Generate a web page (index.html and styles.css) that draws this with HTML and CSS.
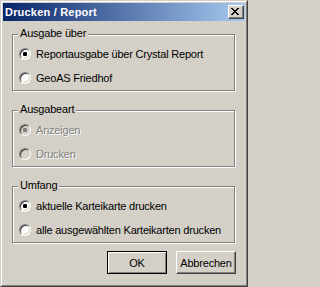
FILE: index.html
```html
<!DOCTYPE html>
<html lang="de">
<head>
<meta charset="utf-8">
<title>Drucken / Report</title>
<link rel="stylesheet" href="styles.css">
</head>
<body>
<div class="window">
  <div class="frame">
    <div class="caption">
      <span class="caption-title">Drucken / Report</span>
      <button class="caption-close" type="button" aria-label="Schließen">
        <svg class="close-glyph" width="8" height="7" viewBox="0 0 8 7" shape-rendering="crispEdges">
          <path d="M0 0h2v1H0z M6 0h2v1H6z M1 1h2v1H1z M5 1h2v1H5z M2 2h4v1H2z M3 3h2v1H3z M2 4h4v1H2z M1 5h2v1H1z M5 5h2v1H5z M0 6h2v1H0z M6 6h2v1H6z" fill="#000"/>
        </svg>
      </button>
    </div>
    <div class="client">
      <div class="group">
        <span class="group-title">Ausgabe über</span>
        <div class="option"><span class="radio checked"></span><span class="option-label">Reportausgabe über Crystal Report</span></div>
        <div class="option"><span class="radio"></span><span class="option-label">GeoAS Friedhof</span></div>
      </div>
      <div class="group">
        <span class="group-title">Ausgabeart</span>
        <div class="option disabled"><span class="radio checked"></span><span class="option-label">Anzeigen</span></div>
        <div class="option disabled"><span class="radio"></span><span class="option-label">Drucken</span></div>
      </div>
      <div class="group">
        <span class="group-title">Umfang</span>
        <div class="option"><span class="radio checked"></span><span class="option-label">aktuelle Karteikarte drucken</span></div>
        <div class="option"><span class="radio"></span><span class="option-label">alle ausgewählten Karteikarten drucken</span></div>
      </div>
      <div class="buttons">
        <button class="btn btn-default" type="button">OK</button>
        <button class="btn" type="button">Abbrechen</button>
      </div>
    </div>
  </div>
</div>
</body>
</html>
```
FILE: styles.css
```css
html, body {
  margin: 0;
  padding: 0;
  background: #d4d0c8;
}

body {
  font-family: "Liberation Sans", Arial, sans-serif;
  font-size: 11px;
  color: #000;
}

.window {
  width: 248px;
  height: 287px;
  box-sizing: border-box;
  border: 1px solid;
  border-color: #d4d0c8 #404040 #404040 #d4d0c8;
  background: #d4d0c8;
}

.frame {
  height: 100%;
  box-sizing: border-box;
  border: 1px solid;
  border-color: #fff #808080 #808080 #fff;
  padding: 1px;
}

.caption {
  height: 18px;
  display: flex;
  align-items: flex-start;
  padding-left: 2px;
  background: linear-gradient(to right, #0a246a, #a6caf0);
}

.caption-title {
  flex: 1;
  margin-top: 1px;
  line-height: 17px;
  color: #fff;
  font-weight: bold;
  letter-spacing: 0.2px;
  white-space: nowrap;
}

.caption-close {
  width: 16px;
  height: 14px;
  margin: 2px 1px 0 0;
  padding: 2px 0 0 2px;
  box-sizing: border-box;
  display: flex;
  align-items: flex-start;
  justify-content: flex-start;
  background: #d4d0c8;
  border: 1px solid;
  border-color: #fff #404040 #404040 #fff;
  box-shadow: inset -1px -1px 0 #808080;
}

.close-glyph {
  display: block;
}

.client {
  display: flex;
  flex-direction: column;
  padding: 13px 10px 0 9px;
}

.group {
  position: relative;
  height: 57px;
  box-sizing: border-box;
  border: 1px solid #808080;
  box-shadow: inset 1px 1px 0 #fff, 1px 1px 0 #fff;
  padding: 13px 0 0 6px;
  display: flex;
  flex-direction: column;
  gap: 12px;
}

.group + .group {
  margin-top: 19px;
}

.group-title {
  position: absolute;
  top: -8px;
  left: 5px;
  padding: 0 2px;
  line-height: 13px;
  background: #d4d0c8;
  letter-spacing: -0.2px;
}

.option {
  display: flex;
  align-items: center;
  gap: 5px;
  height: 12px;
  white-space: nowrap;
}

.option-label {
  line-height: 13px;
  letter-spacing: -0.2px;
}

.radio {
  position: relative;
  flex: none;
  width: 12px;
  height: 12px;
  box-sizing: border-box;
  border-radius: 50%;
  border: 1px solid;
  border-color: #808080 #fff #fff #808080;
  background: #fff;
  box-shadow: inset 1px 1px 0 #404040, inset -1px -1px 0 #d4d0c8;
}

.radio.checked::after {
  content: "";
  position: absolute;
  left: 3px;
  top: 3px;
  width: 4px;
  height: 4px;
  border-radius: 1px;
  background: #000;
}

.option.disabled .radio {
  background: #d4d0c8;
}

.option.disabled .radio.checked::after {
  background: #808080;
}

.option.disabled .option-label {
  color: #808080;
  text-shadow: 1px 1px 0 #fff;
}

.buttons {
  display: flex;
  justify-content: flex-end;
  gap: 9px;
  margin-top: 8px;
  margin-right: -1px;
}

.btn {
  width: 60px;
  height: 23px;
  box-sizing: border-box;
  padding: 0;
  font-family: "Liberation Sans", Arial, sans-serif;
  font-size: 11px;
  letter-spacing: -0.2px;
  color: #000;
  background: #d4d0c8;
  border: 1px solid;
  border-color: #fff #404040 #404040 #fff;
  box-shadow: inset -1px -1px 0 #808080;
}

.btn-default {
  border-color: #000;
  box-shadow: inset 1px 1px 0 #fff, inset -1px -1px 0 #808080;
}
```
